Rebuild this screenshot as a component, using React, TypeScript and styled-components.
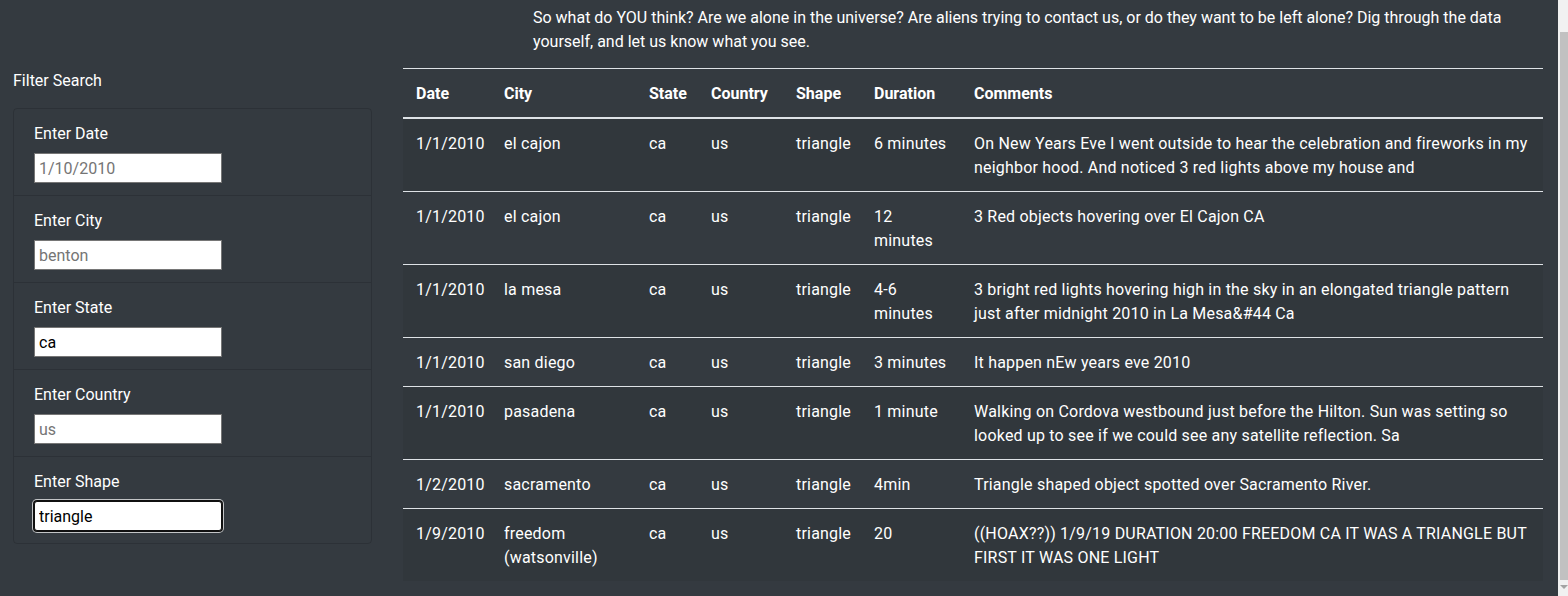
import React from "react";
import styled, { createGlobalStyle } from "styled-components";

const GlobalStyle = createGlobalStyle`
  html, body {
    margin: 0;
    padding: 0;
    background: #343a40;
    overflow: hidden;
  }
  * { box-sizing: border-box; }
`;

const Shell = styled.div`
  display: flex;
  height: 100vh;
  background: #343a40;
  color: #fff;
  font-family: "Segoe UI", Roboto, "Noto Sans", sans-serif;
  font-size: 16px;
  line-height: 24px;
`;

const Main = styled.main`
  flex: 1;
  display: grid;
  grid-template-columns: 359px 1fr;
  grid-template-rows: auto 1fr;
  column-gap: 31px;
  padding: 5px 15px 0 13px;
  min-width: 0;
`;

const Intro = styled.p`
  grid-column: 2;
  margin: 0 0 14px;
  padding: 1px 0 0 130px;
`;

const Sidebar = styled.aside`
  grid-column: 1;
  grid-row: 2;
  display: flex;
  flex-direction: column;
`;

const SideTitle = styled.div`
  padding-top: 1px;
  margin: 0 0 15px;
`;

const FilterCard = styled.ul`
  list-style: none;
  margin: 0;
  padding: 0;
  border: 1px solid rgba(0, 0, 0, 0.14);
  border-radius: 4px;
`;

const FilterItem = styled.li`
  display: flex;
  flex-direction: column;
  align-items: flex-start;
  padding: 12px 20px 12px 20px;
  & + & {
    border-top: 1px solid rgba(0, 0, 0, 0.14);
  }
`;

const FilterLabel = styled.label`
  padding-top: 1px;
  margin-bottom: 7px;
`;

const FilterInput = styled.input<{ $focused?: boolean }>`
  width: 188px;
  height: 30px;
  padding: 0 4px;
  background: #fff;
  color: #000;
  font-family: inherit;
  font-size: 16px;
  border: 1px solid ${(p) => (p.$focused ? "#101010" : "#767676")};
  border-radius: ${(p) => (p.$focused ? "3px" : "0")};
  box-shadow: ${(p) =>
    p.$focused ? "0 0 0 1px #101010, 0 0 0 2px rgba(255,255,255,0.7)" : "none"};
  outline: none;
  &::placeholder {
    color: #757575;
  }
`;

const TableArea = styled.section`
  grid-column: 2;
  grid-row: 2;
`;

const DataTable = styled.table`
  width: 100%;
  border-collapse: collapse;
  table-layout: fixed;
  color: #fff;
`;

const HeadCell = styled.th<{ $w?: number }>`
  width: ${(p) => (p.$w ? `${p.$w}px` : "auto")};
  text-align: left;
  font-weight: 700;
  vertical-align: bottom;
  padding: 13px 12px 11px 13px;
  border-top: 1px solid #dee2e6;
  border-bottom: 2px solid #dee2e6;
`;

const BodyRow = styled.tr`
  &:nth-of-type(odd) {
    background: rgba(0, 0, 0, 0.05);
  }
`;

const Cell = styled.td`
  padding: 13px 12px 11px 13px;
  vertical-align: top;
  border-top: 1px solid #dee2e6;
  letter-spacing: 0.2px;
`;

const ScrollTrack = styled.div`
  width: 10px;
  flex: none;
  background: #f1f1f1;
  display: flex;
  flex-direction: column;
  align-items: flex-end;
`;

const ScrollThumb = styled.div`
  margin-top: 32px;
  width: 8px;
  height: 548px;
  background: #c1c1c1;
`;

const ScrollArrow = styled.div`
  margin-top: 5px;
  width: 0;
  height: 0;
  border-left: 4px solid transparent;
  border-right: 4px solid transparent;
  border-top: 4px solid #a3a3a3;
`;

type Sighting = {
  date: string;
  city: string;
  state: string;
  country: string;
  shape: string;
  duration: string;
  comments: string;
};

const rows: Sighting[] = [
  {
    date: "1/1/2010",
    city: "el cajon",
    state: "ca",
    country: "us",
    shape: "triangle",
    duration: "6 minutes",
    comments:
      "On New Years Eve I went outside to hear the celebration and fireworks in my neighbor hood. And noticed 3 red lights above my house and",
  },
  {
    date: "1/1/2010",
    city: "el cajon",
    state: "ca",
    country: "us",
    shape: "triangle",
    duration: "12 minutes",
    comments: "3 Red objects hovering over El Cajon CA",
  },
  {
    date: "1/1/2010",
    city: "la mesa",
    state: "ca",
    country: "us",
    shape: "triangle",
    duration: "4-6 minutes",
    comments:
      "3 bright red lights hovering high in the sky in an elongated triangle pattern just after midnight 2010 in La Mesa&#44 Ca",
  },
  {
    date: "1/1/2010",
    city: "san diego",
    state: "ca",
    country: "us",
    shape: "triangle",
    duration: "3 minutes",
    comments: "It happen nEw years eve 2010",
  },
  {
    date: "1/1/2010",
    city: "pasadena",
    state: "ca",
    country: "us",
    shape: "triangle",
    duration: "1 minute",
    comments:
      "Walking on Cordova westbound just before the Hilton. Sun was setting so looked up to see if we could see any satellite reflection. Sa",
  },
  {
    date: "1/2/2010",
    city: "sacramento",
    state: "ca",
    country: "us",
    shape: "triangle",
    duration: "4min",
    comments: "Triangle shaped object spotted over Sacramento River.",
  },
  {
    date: "1/9/2010",
    city: "freedom (watsonville)",
    state: "ca",
    country: "us",
    shape: "triangle",
    duration: "20",
    comments:
      "((HOAX??)) 1/9/19 DURATION 20:00 FREEDOM CA IT WAS A TRIANGLE BUT FIRST IT WAS ONE LIGHT",
  },
];

const filters = [
  { id: "date", label: "Enter Date", placeholder: "1/10/2010", value: "" },
  { id: "city", label: "Enter City", placeholder: "benton", value: "" },
  { id: "state", label: "Enter State", placeholder: "", value: "ca" },
  { id: "country", label: "Enter Country", placeholder: "us", value: "" },
  { id: "shape", label: "Enter Shape", placeholder: "", value: "triangle", focused: true },
];

const columns: { label: string; w?: number }[] = [
  { label: "Date", w: 88 },
  { label: "City", w: 145 },
  { label: "State", w: 62 },
  { label: "Country", w: 85 },
  { label: "Shape", w: 78 },
  { label: "Duration", w: 100 },
  { label: "Comments" },
];

export default function App() {
  return (
    <>
      <GlobalStyle />
      <Shell>
        <Main>
          <Intro>
            So what do YOU think? Are we alone in the universe? Are aliens trying to contact
            us, or do they want to be left alone? Dig through the data yourself, and let us
            know what you see.
          </Intro>
          <Sidebar>
            <SideTitle>Filter Search</SideTitle>
            <FilterCard>
              {filters.map((f) => (
                <FilterItem key={f.id}>
                  <FilterLabel htmlFor={f.id}>{f.label}</FilterLabel>
                  <FilterInput
                    id={f.id}
                    type="text"
                    placeholder={f.placeholder}
                    defaultValue={f.value}
                    $focused={f.focused}
                  />
                </FilterItem>
              ))}
            </FilterCard>
          </Sidebar>
          <TableArea>
            <DataTable>
              <thead>
                <tr>
                  {columns.map((c) => (
                    <HeadCell key={c.label} $w={c.w}>
                      {c.label}
                    </HeadCell>
                  ))}
                </tr>
              </thead>
              <tbody>
                {rows.map((r, i) => (
                  <BodyRow key={i}>
                    <Cell>{r.date}</Cell>
                    <Cell>{r.city}</Cell>
                    <Cell>{r.state}</Cell>
                    <Cell>{r.country}</Cell>
                    <Cell>{r.shape}</Cell>
                    <Cell>{r.duration}</Cell>
                    <Cell>{r.comments}</Cell>
                  </BodyRow>
                ))}
              </tbody>
            </DataTable>
          </TableArea>
        </Main>
        <ScrollTrack>
          <ScrollThumb />
          <ScrollArrow />
        </ScrollTrack>
      </Shell>
    </>
  );
}
